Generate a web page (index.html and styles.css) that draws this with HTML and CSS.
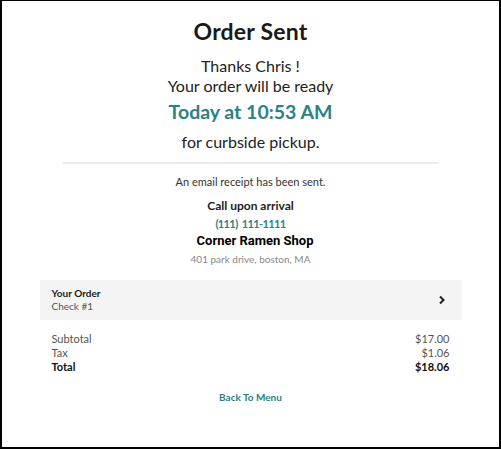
FILE: index.html
```html
<!DOCTYPE html>
<html lang="en">
<head>
<meta charset="utf-8">
<title>Order Sent</title>
<link rel="stylesheet" href="styles.css">
</head>
<body>
<div class="frame">
  <h1 class="title">Order Sent</h1>
  <div class="thanks">
    <p class="line">Thanks Chris !</p>
    <p class="line">Your order will be ready</p>
    <p class="time">Today at 10:53 AM</p>
    <p class="line pickup">for curbside pickup.</p>
  </div>
  <hr class="divider">
  <p class="receipt">An email receipt has been sent.</p>
  <p class="call">Call upon arrival</p>
  <p class="phone">(111) 111-1111</p>
  <p class="shop">Corner Ramen Shop</p>
  <p class="address">401 park drive, boston, MA</p>
  <div class="order">
    <div class="order-text">
      <div class="order-title">Your Order</div>
      <div class="order-check">Check #1</div>
    </div>
    <svg class="chev" width="8" height="10" viewBox="0 0 8 10"><path d="M2 1.5 L5.5 5 L2 8.5" fill="none" stroke="#222" stroke-width="2"/></svg>
  </div>
  <div class="totals">
    <div class="row"><span>Subtotal</span><span>$17.00</span></div>
    <div class="row"><span>Tax</span><span>$1.06</span></div>
    <div class="row total"><span>Total</span><span>$18.06</span></div>
  </div>
  <div class="back">Back To Menu</div>
</div>
</body>
</html>
```
FILE: styles.css
```css
html, body { margin: 0; padding: 0; background: #fff; }
body { font-family: "Lato", "Liberation Sans", sans-serif; color: #222; }
.frame {
  width: 501px; height: 449px; box-sizing: border-box;
  border: 2px solid #000; border-top-width: 1px;
  display: flex; flex-direction: column; align-items: center;
  padding-top: 16px;
}
p { margin: 0; }
.title { margin: 0; font-size: 23px; font-weight: 700; line-height: 28px; color: #1a1a1a; letter-spacing: 0.2px; }
.thanks { margin-top: 11px; text-align: center; }
.line { font-size: 16px; line-height: 20px; color: #222; }
.time { font-size: 19.5px; font-weight: 700; line-height: 32px; color: #2b8285; }
.pickup { margin-top: 4px; }
.divider { width: 376px; height: 2px; border: 0; background: #ececec; margin: 10px 0 0; }
.receipt { margin-top: 11px; font-size: 11px; line-height: 14px; color: #333; }
.call { margin-top: 10px; font-size: 12px; line-height: 14px; font-weight: 700; color: #222; }
.phone { margin-top: 4px; font-size: 11px; line-height: 14px; font-weight: 700; color: #2b8285; letter-spacing: -0.6px; word-spacing: 2px; }
.shop { margin-top: 2px; padding-left: 9px; font-family: "Roboto", "Liberation Sans", sans-serif; font-size: 13px; line-height: 16px; font-weight: 700; color: #000; }
.address { margin-top: 3px; font-size: 10px; line-height: 14px; color: #888; }
.order {
  margin-top: 14px; width: 422px; height: 40px; box-sizing: border-box;
  background: #f4f4f4; padding: 0 16px 0 12px;
  display: flex; align-items: center; justify-content: space-between;
}
.order-title { font-size: 10px; font-weight: 700; line-height: 13px; color: #222; }
.order-check { font-size: 10px; line-height: 13px; color: #555; }
.totals { margin-top: 12px; width: 398px; }
.row { display: flex; justify-content: space-between; font-size: 11px; line-height: 14px; color: #555; }
.row.total { font-weight: 700; color: #111; }
.back { margin-top: 16px; font-size: 10px; font-weight: 700; line-height: 14px; color: #2b7f84; }
```
